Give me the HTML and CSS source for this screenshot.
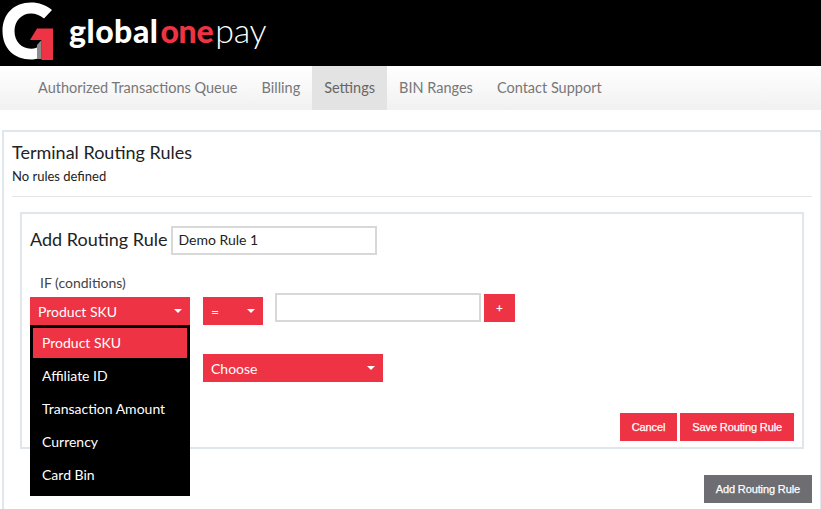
FILE: index.html
```html
<!DOCTYPE html>
<html lang="en">
<head>
<meta charset="utf-8">
<title>Global One Pay</title>
<link rel="stylesheet" href="styles.css">
</head>
<body>
<header class="top">
  <svg class="logo-mark" width="56" height="66" viewBox="0 0 56 66" aria-hidden="true">
    <path d="M52 10 C46 5 39 2.500 31 2.500 C14 2.500 2.500 14 2.500 31 C2.500 48 14 59.500 31 59.500 C33.500 59.500 35.500 59.200 37 58.800 L37 47.500 C35 48.300 33 48.700 31 48.700 C21 48.700 14.500 41 14.500 31 C14.500 21 21.500 13.500 31 13.500 C35.500 13.500 39.500 15 44 18.500 Z" fill="#fff"/>
    <path d="M37 28.500 H53 V60 H41.500 V40 H30 Z" fill="#ee3344"/>
    <path d="M37 45 L41.500 40 V59 L37 59 Z" fill="#8c8c8c"/>
  </svg>
  <div class="brand"><span class="b1">global</span><span class="b2">one</span><span class="b3">pay</span></div>
</header>
<nav class="nav">
  <a class="nav-item">Authorized Transactions Queue</a>
  <a class="nav-item">Billing</a>
  <a class="nav-item active">Settings</a>
  <a class="nav-item">BIN Ranges</a>
  <a class="nav-item">Contact Support</a>
</nav>
<main class="panel">
  <h2 class="title">Terminal Routing Rules</h2>
  <p class="none">No rules defined</p>
  <hr class="rule">
  <section class="box">
    <div class="name-row">
      <h3 class="sub">Add Routing Rule</h3>
      <div class="input name">Demo Rule 1</div>
    </div>
    <div class="if-label">IF (conditions)</div>
    <div class="cond-row">
      <div class="dd-wrap">
        <div class="select sku">Product SKU<span class="caret"></span></div>
        <ul class="menu">
          <li class="menu-item current">Product SKU</li>
          <li class="menu-item">Affiliate ID</li>
          <li class="menu-item">Transaction Amount</li>
          <li class="menu-item">Currency</li>
          <li class="menu-item">Card Bin</li>
        </ul>
      </div>
      <div class="select eq">=<span class="caret"></span></div>
      <div class="input value"></div>
      <button class="btn plus">+</button>
    </div>
    <div class="then-row">
      <div class="select choose">Choose<span class="caret"></span></div>
    </div>
    <div class="actions">
      <button class="btn">Cancel</button>
      <button class="btn">Save Routing Rule</button>
    </div>
  </section>
  <div class="add-row"><button class="btn grey">Add Routing Rule</button></div>
</main>
</body>
</html>
```
FILE: styles.css
```css
* { box-sizing: border-box; }
html, body { margin: 0; height: 509px; overflow: hidden; }
body { font-family: Lato, "Open Sans", sans-serif; background: #fff; color: #222; display: flex; flex-direction: column; }
.top { height: 66px; background: #000; display: flex; align-items: center; flex: none; }
.logo-mark { flex: none; }
.brand { margin: 0 0 6px 13px; font-size: 32px; line-height: 60px; letter-spacing: -0.3px; color: #fff; }
.b1 { font-weight: 900; letter-spacing: 0.5px; }
.b2 { font-weight: 900; color: #ee3344; margin-left: 2px; }
.b3 { font-weight: 300; margin-left: 2px; font-size: 34px; }
.nav { height: 44px; flex: none; display: flex; padding-left: 26px; background: linear-gradient(#fff, #f1f1f1); }
.nav-item { padding: 0 12px; font-size: 14.5px; line-height: 44px; color: #777; }
.active { background: #e3e3e3; color: #666; }
.panel { margin: 20px -1px 0 2px; flex: 1; border: 2px solid #e0e7ec; border-bottom: 0; padding: 9px 8px 0 8px; }
.title { margin: 0; font-size: 18px; font-weight: 400; line-height: 22px; color: #222; }
.none { margin: 4px 0 0; font-size: 13px; line-height: 18px; color: #222; }
.rule { margin: 11px 0 0; border: 0; border-top: 1px solid #e3e6e8; }
.box { position: relative; margin: 15px 8px 0 8px; height: 237px; border: 2px solid #e0e7ec; padding: 0 8px; }
.name-row { display: flex; align-items: center; margin-top: 12px; height: 29px; }
.sub { margin: 0 0 3px; font-size: 18px; font-weight: 400; color: #222; }
.input { border: 2px solid #d8d8d8; background: #fff; font-size: 14px; color: #222; }
.name { margin-left: 3px; width: 206px; height: 29px; line-height: 24px; padding-left: 6px; }
.if-label { margin: 18px 0 0 10px; font-size: 14px; line-height: 20px; color: #444; }
.cond-row { display: flex; align-items: flex-start; margin-top: 4px; }
.dd-wrap { position: relative; width: 160px; flex: none; }
.select { position: relative; height: 28px; background: #ee3344; color: #fff; font-size: 14px; line-height: 30px; padding-left: 8px; }
.caret { position: absolute; right: 8px; top: 12px; width: 0; height: 0; border-left: 4px solid transparent; border-right: 4px solid transparent; border-top: 4px solid #fff; }
.menu { position: absolute; z-index: 2; left: 0; top: 28px; width: 160px; margin: 0; padding: 3px; list-style: none; background: #000; height: 171px; }
.menu-item { height: 33px; line-height: 33px; padding-left: 9px; color: #fff; font-size: 14px; }
.menu-item.current { height: 30px; line-height: 30px; margin-bottom: 1px; background: #ee3344; }
.eq { margin-left: 13px; width: 60px; }
.value { margin: -4px 0 0 12px; width: 206px; height: 29px; }
.plus { margin: -3px 0 0 3px; width: 31px; height: 28px; padding: 0; }
.btn { border: 0; background: #ee3344; color: #fff; font-family: "Liberation Sans", Arial, sans-serif; font-size: 11px; font-weight: 400; letter-spacing: -0.12px; -webkit-text-stroke: 0.25px #fff; height: 28px; padding: 0 12px; }
.then-row { margin: 29px 0 0 173px; }
.choose { width: 180px; }
.actions { position: absolute; right: 8px; bottom: 6px; display: flex; gap: 3px; }
.add-row { display: flex; justify-content: flex-end; margin-top: 26px; }
.grey { background: #6d6d72; }
```
